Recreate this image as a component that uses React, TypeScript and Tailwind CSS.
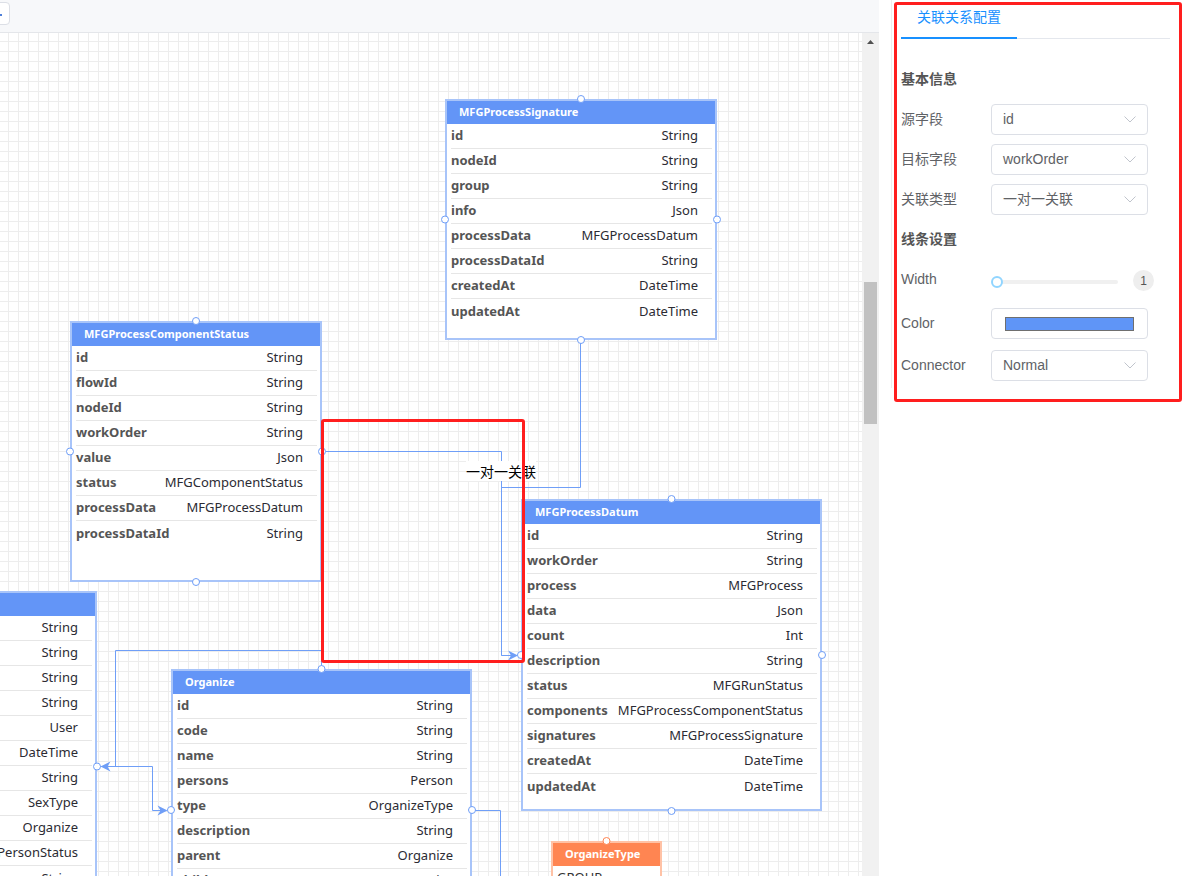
import React from "react";

type Field = [string, string];

type Entity = {
  id: string;
  title: string;
  x: number;
  y: number;
  w: number;
  h: number;
  fields: Field[];
  orange?: boolean;
};

// canvas starts below the toolbar; node coords are page coords
const TOP = 33;
const EDGE = "#6f9ef7";

const entities: Entity[] = [
  {
    id: "sig",
    title: "MFGProcessSignature",
    x: 445,
    y: 99,
    w: 272,
    h: 241,
    fields: [
      ["id", "String"],
      ["nodeId", "String"],
      ["group", "String"],
      ["info", "Json"],
      ["processData", "MFGProcessDatum"],
      ["processDataId", "String"],
      ["createdAt", "DateTime"],
      ["updatedAt", "DateTime"],
    ],
  },
  {
    id: "comp",
    title: "MFGProcessComponentStatus",
    x: 70,
    y: 321,
    w: 252,
    h: 261,
    fields: [
      ["id", "String"],
      ["flowId", "String"],
      ["nodeId", "String"],
      ["workOrder", "String"],
      ["value", "Json"],
      ["status", "MFGComponentStatus"],
      ["processData", "MFGProcessDatum"],
      ["processDataId", "String"],
    ],
  },
  {
    id: "datum",
    title: "MFGProcessDatum",
    x: 521,
    y: 499,
    w: 301,
    h: 312,
    fields: [
      ["id", "String"],
      ["workOrder", "String"],
      ["process", "MFGProcess"],
      ["data", "Json"],
      ["count", "Int"],
      ["description", "String"],
      ["status", "MFGRunStatus"],
      ["components", "MFGProcessComponentStatus"],
      ["signatures", "MFGProcessSignature"],
      ["createdAt", "DateTime"],
      ["updatedAt", "DateTime"],
    ],
  },
  {
    id: "person",
    title: "Person",
    x: -204,
    y: 591,
    w: 301,
    h: 351,
    fields: [
      ["id", "String"],
      ["code", "String"],
      ["name", "String"],
      ["phone", "String"],
      ["user", "User"],
      ["birthday", "DateTime"],
      ["email", "String"],
      ["sex", "SexType"],
      ["organize", "Organize"],
      ["status", "PersonStatus"],
      ["organizeId", "String"],
    ],
  },
  {
    id: "org",
    title: "Organize",
    x: 171,
    y: 669,
    w: 301,
    h: 282,
    fields: [
      ["id", "String"],
      ["code", "String"],
      ["name", "String"],
      ["persons", "Person"],
      ["type", "OrganizeType"],
      ["description", "String"],
      ["parent", "Organize"],
      ["children", "Organize"],
      ["createdAt", "DateTime"],
      ["updatedAt", "DateTime"],
    ],
  },
  {
    id: "orgType",
    title: "OrganizeType",
    x: 551,
    y: 841,
    w: 111,
    h: 110,
    orange: true,
    fields: [
      ["GROUP", ""],
      ["COMPANY", ""],
      ["DEPARTMENT", ""],
    ],
  },
];

const edges = [
  "M321 451.5 H501.5 V655.5 H512",
  "M580.5 340 V487.5 H501.5 V655.5",
  "M321.5 669 V650.5 H115.5 V766.5 H106",
  "M97 766.5 H152.5 V810.5 H162",
  "M472 810.5 H500.5 V880",
];

const arrows = [
  "M518 655.5 L508 650.5 L511 655.5 L508 660.5 Z",
  "M100.5 766.5 L110.5 761.5 L107.5 766.5 L110.5 771.5 Z",
  "M167.5 810.5 L157.5 805.5 L160.5 810.5 L157.5 815.5 Z",
];

function EntityNode({ e }: { e: Entity }) {
  return (
    <div
      className={`absolute flex flex-col overflow-hidden border-2 bg-white ${
        e.orange ? "border-[#ffc2a6]" : "border-[#a8c4f9]"
      }`}
      style={{ left: e.x, top: e.y - TOP, width: e.w, height: e.h }}
    >
      <div
        className={`flex h-[23px] shrink-0 items-center px-[12px] text-[11px] font-bold text-white ${
          e.orange ? "bg-[#ff8552]" : "bg-[#6395f7]"
        }`}
      >
        {e.title}
      </div>
      {e.fields.map(([name, type], i) => (
        <div
          key={name}
          className={`ml-[4px] mr-[3px] flex h-[25px] shrink-0 items-center justify-between pr-[14px] text-[13px] ${
            i < e.fields.length - 1 ? "border-b border-[#e6e6e6]" : ""
          }`}
        >
          <span className={type ? "font-bold text-[#555]" : "text-[#333]"}>{name}</span>
          <span className="text-[#2b2b33]">{type}</span>
        </div>
      ))}
    </div>
  );
}

function Ports({ e }: { e: Entity }) {
  const cx = e.x + e.w / 2;
  const cy = e.y + e.h / 2;
  const pts = [
    [cx, e.y],
    [cx, e.y + e.h],
    [e.x, cy],
    [e.x + e.w, cy],
  ];
  const stroke = e.orange ? "#ff8552" : EDGE;
  return (
    <>
      {pts.map(([x, y], i) => (
        <circle key={i} cx={x} cy={y} r={3.5} fill="#fff" stroke={stroke} strokeWidth={1} />
      ))}
    </>
  );
}

function Chevron() {
  return (
    <svg width="12" height="7" viewBox="0 0 12 7" fill="none">
      <path d="M0.5 0.5 L6 6 L11.5 0.5" stroke="#c0c4cc" strokeWidth="1" />
    </svg>
  );
}

function SelectBox({ value }: { value: string }) {
  return (
    <div className="flex h-[31px] w-[157px] items-center justify-between rounded-[4px] border border-[#dcdfe6] bg-white pl-[11px] pr-[11px] text-[14px] text-[#606266]">
      <span>{value}</span>
      <Chevron />
    </div>
  );
}

function FormRow({ label, children, className = "" }: { label: string; children: React.ReactNode; className?: string }) {
  return (
    <div className={`flex h-[31px] items-center ${className}`}>
      <div className="w-[90px] text-[14px] text-[#606266]">{label}</div>
      {children}
    </div>
  );
}

export default function App() {
  return (
    <div className="flex h-[876px] w-[1201px] overflow-hidden bg-white font-['Liberation_Sans','Noto_Sans_CJK_SC',sans-serif]">
      {/* Editor column */}
      <div className="flex w-[879px] shrink-0 flex-col">
        {/* Toolbar */}
        <div className="flex h-[33px] shrink-0 items-start border-b border-[#e4e6ea] bg-[#f7f8fa] pt-[2px]">
          <button className="-ml-[21px] flex h-[23px] w-[31px] items-center justify-end rounded-[4px] border border-[#dcdfe6] bg-white pr-[6px]">
            <svg width="10" height="11" viewBox="0 0 10 11">
              <rect x="0" y="1" width="2" height="9" fill="#e8913c" />
              <rect x="3" y="1" width="2" height="9" fill="#4f7fd9" />
              <rect x="6" y="6" width="3" height="2" fill="#4f7fd9" />
            </svg>
          </button>
        </div>

        {/* Canvas + scrollbar */}
        <div className="flex min-h-0 flex-1">
          <div className="relative flex-1 overflow-hidden bg-white bg-[linear-gradient(to_right,#ededed_1px,transparent_1px),linear-gradient(to_bottom,#ededed_1px,transparent_1px)] bg-[length:10px_10px] bg-[position:8px_8px] font-['Noto_Sans',sans-serif]">
            {entities.map((e) => (
              <EntityNode key={e.id} e={e} />
            ))}

            <svg className="pointer-events-none absolute left-0 top-0" width="863" height="843">
              <g transform={`translate(0,-${TOP})`}>
                {edges.map((d, i) => (
                  <path key={i} d={d} fill="none" stroke={EDGE} strokeWidth={1} />
                ))}
                {arrows.map((d, i) => (
                  <path key={i} d={d} fill={EDGE} />
                ))}
                {entities.map((e) => (
                  <Ports key={e.id} e={e} />
                ))}
              </g>
            </svg>

            {/* edge label */}
            <div className="absolute left-[466px] top-[428px] bg-white text-[14px] leading-[20px] text-black font-['Noto_Sans_CJK_SC',sans-serif]">
              一对一关联
            </div>

            {/* annotation */}
            <div className="absolute left-[321px] top-[386px] h-[244px] w-[204px] rounded-[3px] border-[3px] border-[#ff1e1e]" />
          </div>

          {/* Scrollbar */}
          <div className="flex w-[17px] shrink-0 flex-col items-center bg-[#f1f1f1]">
            <div className="flex h-[17px] items-center justify-center">
              <svg width="7" height="4" viewBox="0 0 7 4">
                <path d="M0 4 L3.5 0 L7 4 Z" fill="#505050" />
              </svg>
            </div>
            <div className="mt-[232px] h-[142px] w-[13px] bg-[#c1c1c1]" />
          </div>
        </div>
      </div>

      {/* Config panel */}
      <div className="relative flex-1 bg-white">
        <div className="ml-[12px] h-[388px] border-l border-[#eeeeee] pl-[9px]">
          {/* tabs */}
          <div className="flex h-[39px] w-[269px] border-b border-[#e4e7ed]">
            <div className="-mb-px flex h-[39px] items-center border-b-2 border-[#1890ff] px-[16px] pb-[3px] text-[14px] text-[#1890ff]">
              关联关系配置
            </div>
          </div>

          <div className="mt-[30px] text-[14px] font-semibold leading-[20px] text-[#555]">基本信息</div>

          <FormRow label="源字段" className="mt-[15px]">
            <SelectBox value="id" />
          </FormRow>
          <FormRow label="目标字段" className="mt-[9px]">
            <SelectBox value="workOrder" />
          </FormRow>
          <FormRow label="关联类型" className="mt-[9px]">
            <SelectBox value="一对一关联" />
          </FormRow>

          <div className="mt-[14px] text-[14px] font-semibold leading-[20px] text-[#555]">线条设置</div>

          <FormRow label="Width" className="mt-[15px]">
            <div className="flex items-center gap-[9px] pt-[5px]">
              <div className="relative h-[12px] w-[133px]">
                <div className="absolute left-[6px] right-[6px] top-[4px] h-[4px] rounded-full bg-[#f0f0f0]" />
                <div className="absolute left-0 top-0 h-[12px] w-[12px] rounded-full border-2 border-[#91d5ff] bg-white" />
              </div>
              <div className="-mt-[3px] flex h-[21px] w-[21px] items-center justify-center rounded-full bg-[#eeeeee] text-[12px] text-[#555]">
                1
              </div>
            </div>
          </FormRow>

          <FormRow label="Color" className="mt-[13px]">
            <div className="flex h-[31px] w-[157px] items-center justify-center rounded-[4px] border border-[#dcdfe6]">
              <div className="h-[14px] w-[129px] border border-[#6f6f6f] bg-[#5f95f7]" />
            </div>
          </FormRow>

          <FormRow label="Connector" className="mt-[11px]">
            <SelectBox value="Normal" />
          </FormRow>
        </div>

        {/* annotation */}
        <div className="absolute left-[15px] top-[2px] h-[400px] w-[288px] rounded-[3px] border-[3px] border-[#ff1e1e]" />
      </div>
    </div>
  );
}
